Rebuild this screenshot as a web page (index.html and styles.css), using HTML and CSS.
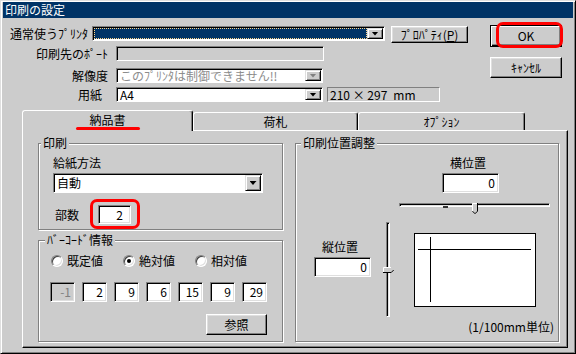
FILE: index.html
```html
<!DOCTYPE html>
<html lang="ja">

<head>
    <meta charset="UTF-8">
    <meta name="viewport" content="width=device-width, initial-scale=1.0">
    <title>印刷の設定</title>
    <link rel="stylesheet" href="styles.css">
</head>

<body>
    <div class="window">
        <div class="titlebar">印刷の設定</div>

        <div class="top">
            <div class="fields">
                <div class="row row-printer">
                    <span class="printer-label">通常使うﾌﾟﾘﾝﾀ</span>
                    <div class="combo printer">
                        <div class="combo-text selected"></div>
                        <div class="drop"><i class="arrow"></i></div>
                    </div>
                    <div class="button props">ﾌﾟﾛﾊﾟﾃｨ(<u>P</u>)</div>
                </div>
                <div class="row row-port">
                    <span class="label">印刷先のﾎﾟｰﾄ</span>
                    <div class="field disabled port"></div>
                </div>
                <div class="row row-res">
                    <span class="label">解像度</span>
                    <div class="combo narrow disabled">
                        <div class="combo-text">このﾌﾟﾘﾝﾀは制御できません!!</div>
                        <div class="drop"><i class="arrow"></i></div>
                    </div>
                </div>
                <div class="row row-paper">
                    <span class="label label-paper">用紙</span>
                    <div class="combo narrow">
                        <div class="combo-text">A4</div>
                        <div class="drop"><i class="arrow"></i></div>
                    </div>
                    <div class="static size"><span>210 × 297</span><span>mm</span></div>
                </div>
            </div>

            <div class="actions">
                <div class="button default ok">OK</div>
                <div class="button cancel">ｷｬﾝｾﾙ</div>
                <span class="mark mark-ok"></span>
            </div>
        </div>

        <div class="tabs">
            <div class="tab active">納品書<span class="mark-line"></span></div>
            <div class="tab tab-tag">荷札</div>
            <div class="tab tab-opt">ｵﾌﾟｼｮﾝ</div>
        </div>

        <div class="panel">
            <div class="col">
                <div class="group g-print">
                    <span class="legend">印刷</span>
                    <div class="gbody">
                        <div class="caption">給紙方法</div>
                        <div class="combo feed">
                            <div class="combo-text">自動</div>
                            <div class="drop"><i class="arrow"></i></div>
                        </div>
                        <div class="copies">
                            <span>部数</span>
                            <div class="edit copies-edit">2<span class="mark mark-copies"></span></div>
                        </div>
                    </div>
                </div>

                <div class="group g-barcode">
                    <span class="legend">ﾊﾞｰｺｰﾄﾞ情報</span>
                    <div class="gbody">
                        <div class="radios">
                            <div class="radio-item"><span class="radio"></span>既定値</div>
                            <div class="radio-item"><span class="radio checked"></span>絶対値</div>
                            <div class="radio-item"><span class="radio"></span>相対値</div>
                        </div>
                        <div class="codes">
                            <div class="edit code disabled">-1</div>
                            <div class="edit code">2</div>
                            <div class="edit code">9</div>
                            <div class="edit code">6</div>
                            <div class="edit code">15</div>
                            <div class="edit code">9</div>
                            <div class="edit code">29</div>
                        </div>
                        <div class="button ref">参照</div>
                    </div>
                </div>
            </div>

            <div class="group g-pos">
                <span class="legend">印刷位置調整</span>
                <div class="hpos">
                    <div class="caption">横位置</div>
                    <div class="edit pos-edit">0</div>
                </div>
                <div class="hslider">
                    <div class="htrack"></div>
                    <span class="range"></span>
                    <svg class="hthumb" width="6" height="11" viewBox="0 0 6 11">
                        <path d="M0 0H6V8L3 11L0 8Z" fill="#ccc"/>
                        <path d="M0.5 8V0.5H5" fill="none" stroke="#fff"/>
                        <path d="M5.5 0V8.2L3 10.7L0.5 8.2" fill="none" stroke="#000"/>
                    </svg>
                </div>
                <div class="lower">
                    <div class="vpos">
                        <div class="caption">縦位置</div>
                        <div class="edit pos-edit">0</div>
                    </div>
                    <div class="vslider">
                        <div class="vtrack"></div>
                        <svg class="vthumb" width="11" height="6" viewBox="0 0 11 6">
                            <path d="M0 0H8L11 3L8 6H0Z" fill="#ccc"/>
                            <path d="M0.5 5.5V0.5H8" fill="none" stroke="#fff"/>
                            <path d="M0 5.5H8.2L10.7 3" fill="none" stroke="#000"/>
                        </svg>
                    </div>
                    <div class="preview">
                        <svg width="120" height="72"><path d="M3 15.5H116M15.5 3V68" stroke="#000"/></svg>
                    </div>
                </div>
                <div class="unit-note">(1/100mm単位)</div>
            </div>
        </div>
    </div>
</body>

</html>
```

FILE: styles.css
```css
* {
    box-sizing: border-box;
}

body {
    margin: 0;
    background-color: #ccc;
    font-family: "Noto Sans CJK JP", "Noto Sans", sans-serif;
    font-size: 12px;
    line-height: 14px;
    color: #000;
}

.window {
    position: relative;
    width: 576px;
    height: 354px;
    padding: 1px;
    background-color: #ccc;
    border: 1px solid;
    border-color: #dfdfdf #000 #000 #dfdfdf;
    box-shadow: inset 1px 1px #fff, inset -1px -1px #808080;
}

.titlebar {
    height: 16px;
    margin: 0 1px;
    padding-left: 2px;
    background-color: #003366;
    color: #fff;
    line-height: 16px;
}

/* top area */
.top {
    display: flex;
    padding-top: 7px;
}

.fields {
    width: 488px;
    padding-top: 1px;
}

.row {
    display: flex;
    align-items: center;
}

.row-printer {
    align-items: flex-start;
}

.row-port {
    margin-top: 3px;
}

.row-res {
    margin-top: 7px;
}

.row-paper {
    margin-top: 4px;
}

.printer-label {
    width: 82px;
    margin: 1px 0 0 8px;
    white-space: nowrap;
}

.label {
    width: 106px;
    margin-right: 8px;
    text-align: right;
    white-space: nowrap;
}

.label-paper {
    padding-right: 6px;
}

/* controls */
.button {
    display: flex;
    align-items: center;
    justify-content: center;
    background-color: #ccc;
    border: 1px solid;
    border-color: #fff #000 #000 #fff;
    box-shadow: inset -1px -1px #808080, inset 1px 1px #dfdfdf;
    white-space: nowrap;
}

.button.default {
    border-color: #000;
    box-shadow: inset 1px 1px #fff, inset -1px -1px #000, inset -2px -2px #808080;
}

.props {
    width: 77px;
    height: 17px;
    margin-left: 6px;
}

.combo {
    display: flex;
    height: 15px;
    padding: 1px;
    background-color: #fff;
    border: 1px solid;
    border-color: #808080 #fff #fff #808080;
    box-shadow: inset 1px 1px #000;
}

.combo-text {
    flex: 1;
    padding-left: 2px;
    display: flex;
    align-items: center;
    white-space: nowrap;
}

.combo-text.selected {
    background-color: #003366;
    outline: 1px dotted #ffd58a;
    outline-offset: -1px;
}

.combo.disabled .combo-text {
    color: #8c8c8c;
}

.drop {
    flex: none;
    width: 16px;
    display: flex;
    align-items: center;
    justify-content: center;
    background-color: #ccc;
    border: 1px solid;
    border-color: #dfdfdf #000 #000 #dfdfdf;
    box-shadow: inset 1px 1px #fff, inset -1px -1px #808080;
}

.arrow {
    display: block;
    width: 7px;
    height: 4px;
    background-color: #000;
    clip-path: polygon(0 0, 100% 0, 50% 100%);
}

.combo.disabled .arrow {
    background-color: #808080;
}

.printer {
    width: 293px;
}

.narrow {
    width: 207px;
}

.field {
    height: 15px;
    background-color: #fff;
    border: 1px solid;
    border-color: #808080 #fff #fff #808080;
    box-shadow: inset 1px 1px #000;
}

.field.disabled {
    background-color: #ccc;
}

.port {
    width: 208px;
}

.static {
    display: flex;
    align-items: center;
    gap: 6px;
    height: 15px;
    padding-left: 2px;
    border: 1px solid;
    border-color: #808080 #fff #fff #808080;
    white-space: nowrap;
}

.size {
    width: 113px;
    margin-left: 4px;
}

.actions {
    position: relative;
    width: 72px;
}

.ok {
    height: 22px;
}

.cancel {
    height: 21px;
    margin-top: 10px;
}

/* red annotations */
.mark {
    position: absolute;
    border: 3px solid #f00;
    border-radius: 7px;
}

.mark-ok {
    left: 6px;
    top: -3px;
    width: 67px;
    height: 26px;
}

.mark-copies {
    left: -9px;
    top: -7px;
    width: 50px;
    height: 30px;
}

.mark-line {
    position: absolute;
    left: 53px;
    top: 16px;
    width: 64px;
    height: 3px;
    border-radius: 2px;
    background-color: #f00;
}

/* tabs */
.tabs {
    display: flex;
    align-items: flex-end;
    height: 20px;
    margin: 8px 0 0 20px;
}

.tab {
    height: 18px;
    padding-top: 2px;
    text-align: center;
    border: 1px solid;
    border-bottom: 0;
    border-color: #fff #000 #000 #fff;
    border-radius: 3px 3px 0 0;
    box-shadow: inset -1px 0 #808080;
    white-space: nowrap;
}

.tab.active {
    position: relative;
    z-index: 1;
    width: 171px;
    height: 21px;
    margin-bottom: -1px;
    background-color: #ccc;
}

.tab-tag {
    width: 165px;
}

.tab-opt {
    width: 167px;
}

.panel {
    display: flex;
    gap: 12px;
    width: 546px;
    height: 218px;
    margin-left: 20px;
    padding: 12px 0 0 15px;
    border: 1px solid;
    border-color: #fff #000 #000 #fff;
    box-shadow: inset -1px -1px #808080;
}

.col {
    display: flex;
    flex-direction: column;
    gap: 10px;
    width: 245px;
}

/* group boxes */
.group {
    border: 1px solid #808080;
    box-shadow: inset 1px 1px #fff, 1px 1px #fff;
}

.legend {
    display: block;
    width: max-content;
    margin: -8px 0 0 2px;
    padding: 0 2px;
    background-color: #ccc;
    white-space: nowrap;
}

.g-print {
    height: 87px;
}

.g-print .gbody {
    padding-left: 14px;
}

.caption {
    margin-top: 6px;
    white-space: nowrap;
}

.feed {
    width: 210px;
    height: 20px;
    margin-top: 3px;
}

.copies {
    display: flex;
    align-items: center;
    margin-top: 12px;
    padding-left: 2px;
}

.edit {
    position: relative;
    display: flex;
    align-items: center;
    justify-content: flex-end;
    padding-right: 3px;
    background-color: #fff;
    border: 1px solid;
    border-color: #808080 #fff #fff #808080;
    box-shadow: inset 1px 1px #000, inset -1px -1px #dfdfdf;
}

.edit.disabled {
    background-color: #ccc;
    color: #808080;
}

.copies-edit {
    width: 33px;
    height: 19px;
    margin-left: 19px;
    padding-right: 7px;
}

.g-barcode {
    height: 102px;
}

.g-barcode .legend {
    margin-left: 6px;
}

.g-barcode .gbody {
    padding-left: 12px;
}

.radios {
    display: flex;
    gap: 20px;
    margin-top: 7px;
}

.radio-item {
    display: flex;
    align-items: center;
    gap: 4px;
    white-space: nowrap;
}

.radio {
    position: relative;
    width: 12px;
    height: 12px;
    border-radius: 50%;
    background-color: #fff;
    border: 1px solid;
    border-color: #808080 #fff #fff #808080;
    box-shadow: inset 1px 1px #404040, inset -1px -1px #dfdfdf;
}

.radio.checked::after {
    content: "";
    position: absolute;
    left: 3px;
    top: 3px;
    width: 4px;
    height: 4px;
    border-radius: 50%;
    background-color: #000;
}

.codes {
    display: flex;
    gap: 7px;
    margin: 14px 0 0 -1px;
}

.code {
    width: 25px;
    height: 20px;
}

.ref {
    width: 61px;
    height: 21px;
    margin: 12px 0 0 155px;
}

/* position adjust */
.g-pos {
    width: 264px;
    height: 199px;
}

.g-pos .legend {
    margin-left: 5px;
}

.hpos {
    width: 57px;
    margin: 6px 0 0 146px;
}

.hpos .caption,
.vpos .caption {
    padding-left: 8px;
}

.hpos .caption {
    margin-top: 0;
}

.pos-edit {
    height: 20px;
    margin-top: 3px;
}

.hslider {
    position: relative;
    width: 151px;
    height: 11px;
    margin: 10px 0 0 103px;
}

.htrack {
    height: 4px;
    margin-top: 2px;
    background-color: #dfdfdf;
    border: 1px solid;
    border-color: #808080 #fff #fff #808080;
    box-shadow: inset 1px 1px #000;
}

.range {
    position: absolute;
    left: 44px;
    top: 3px;
    width: 5px;
    height: 2px;
    background-color: #333;
}

.hthumb {
    position: absolute;
    left: 73px;
    top: 0;
}

.lower {
    display: flex;
    margin-top: 8px;
}

.vpos {
    width: 57px;
    margin-left: 18px;
}

.vpos .caption {
    margin-top: 18px;
}

.vslider {
    position: relative;
    width: 11px;
    height: 95px;
    margin-left: 12px;
}

.vtrack {
    width: 4px;
    height: 100%;
    margin-left: 3px;
    background-color: #dfdfdf;
    border: 1px solid;
    border-color: #808080 #fff #fff #808080;
    box-shadow: inset 1px 1px #000;
}

.vthumb {
    position: absolute;
    left: 0;
    top: 45px;
}

.preview {
    width: 122px;
    height: 74px;
    margin: 11px 0 0 20px;
    background-color: #fff;
    border: 1px solid #000;
}

.preview svg {
    display: block;
}

.unit-note {
    margin-top: 3px;
    padding-right: 4px;
    text-align: right;
    white-space: nowrap;
}
```
